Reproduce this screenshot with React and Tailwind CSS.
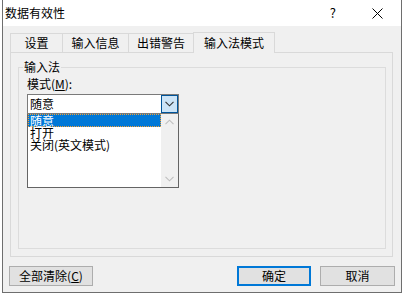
import React from "react";

const tabs = [
  { label: "设置", w: "w-[52px]" },
  { label: "输入信息", w: "w-[66px]" },
  { label: "出错警告", w: "w-[65px]" },
];

function ChevronDown({ className }) {
  return (
    <svg width="9" height="6" viewBox="0 0 9 6" className={className}>
      <path d="M0.5 0.8 L4.5 4.8 L8.5 0.8" fill="none" stroke="currentColor" strokeWidth="1.1" />
    </svg>
  );
}

function ChevronUp({ className }) {
  return (
    <svg width="9" height="6" viewBox="0 0 9 6" className={className}>
      <path d="M0.5 5.2 L4.5 1.2 L8.5 5.2" fill="none" stroke="currentColor" strokeWidth="1.1" />
    </svg>
  );
}

export default function App() {
  return (
    <div
      className="w-[404px] h-[296px] bg-white text-[12px] text-black overflow-hidden"
      style={{ fontFamily: '"Noto Sans CJK SC", "Noto Sans", sans-serif' }}
    >
      <div className="ml-[2px] w-[400px] h-[293px] border-x border-b border-[#6e6e6e] flex flex-col">
        {/* Title bar */}
        <div className="h-[26px] bg-white flex items-center shrink-0">
          <span className="pl-[2px] leading-[14px]">数据有效性</span>
          <span className="ml-auto mr-[36px] leading-[14px] text-[13px]">?</span>
          <svg width="11" height="11" viewBox="0 0 11 11" className="mr-[18px]">
            <path d="M0.5 0.5 L10.5 10.5 M10.5 0.5 L0.5 10.5" stroke="#000" strokeWidth="1" />
          </svg>
        </div>

        {/* Body */}
        <div className="flex-1 bg-[#f0f0f0] pl-[7px] pr-[8px] pt-[6px]">
          {/* Tabs */}
          <div className="flex items-start h-[20px]">
            {tabs.map((t) => (
              <div
                key={t.label}
                className={`${t.w} mt-[1px] h-[19px] border-t border-l border-[#d9d9d9] flex items-center justify-center leading-[14px]`}
              >
                {t.label}
              </div>
            ))}
            <div className="relative z-10 w-[82px] h-[21px] border-t border-x border-[#d9d9d9] bg-[#f0f0f0] flex items-center justify-center leading-[14px]">
              输入法模式
            </div>
          </div>

          {/* Tab panel */}
          <div className="h-[205px] border border-[#d9d9d9] pt-[14px] pl-[7px] pr-[6px]">
            <div className="relative h-[182px] border border-[#dcdcdc] pl-[8px] pt-[9px]">
              <span className="absolute left-[4px] top-[-8px] px-px bg-[#f0f0f0] leading-[14px]">
                输入法
              </span>
              <div className="leading-[14px]">
                模式(<span className="underline underline-offset-1">M</span>):
              </div>

              {/* Select */}
              <div className="mt-[3px] w-[152px]">
                <div className="h-[20px] border border-[#7a7a7a] bg-white flex items-stretch">
                  <span className="pl-[2px] flex items-center leading-[14px]">随意</span>
                  <div className="ml-auto w-[17px] border border-[#005499] bg-[#cce4f7] flex items-center justify-center text-[#333]">
                    <ChevronDown />
                  </div>
                </div>
                <div className="h-[74px] border-x border-b border-[#646464] bg-white flex">
                  <div className="flex-1 flex flex-col leading-[12px]">
                    <div className="h-[13px] bg-[#0078d7] text-white border border-dotted border-[#f5a033] pl-px flex items-center">
                      随意
                    </div>
                    <div className="h-[12px] pl-[2px] flex items-center">打开</div>
                    <div className="h-[12px] pl-[2px] flex items-center">关闭(英文模式)</div>
                  </div>
                  <div className="w-[17px] bg-[#f0f0f0] flex flex-col items-center justify-between py-[5px] text-[#bfbfbf]">
                    <ChevronUp />
                    <ChevronDown />
                  </div>
                </div>
              </div>
            </div>
          </div>

          {/* Buttons */}
          <div className="mt-[9px] flex items-center -ml-px">
            <button className="w-[84px] h-[20px] border border-[#adadad] bg-[#e1e1e1] leading-[14px]">
              全部清除(<span className="underline underline-offset-1">C</span>)
            </button>
            <button className="ml-auto w-[74px] h-[20px] border-2 border-[#0078d7] bg-[#e1e1e1] leading-[14px]">
              确定
            </button>
            <button className="ml-[9px] mr-[-2px] w-[75px] h-[20px] border border-[#adadad] bg-[#e1e1e1] leading-[14px]">
              取消
            </button>
          </div>
        </div>
      </div>
    </div>
  );
}
